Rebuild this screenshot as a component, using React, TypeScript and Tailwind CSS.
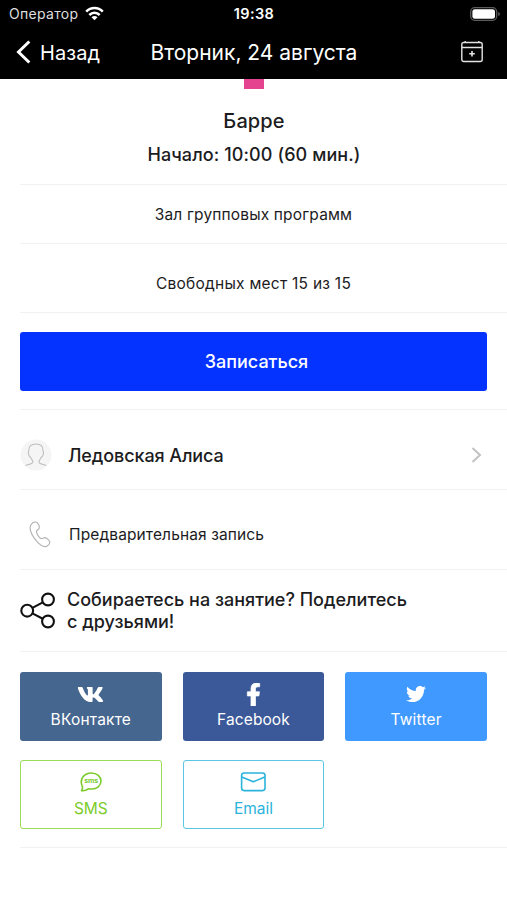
import type { ReactNode } from 'react';
import { FaFacebookF, FaTwitter, FaVk } from 'react-icons/fa';

type Share = { label: string; icon: ReactNode; box: string; text: string };

const shares: Share[] = [
  {
    label: 'ВКонтакте',
    icon: <FaVk size={27} />,
    box: 'bg-[#45668e] text-white',
    text: 'text-[15.5px] tracking-[0.2px]',
  },
  {
    label: 'Facebook',
    icon: <FaFacebookF size={23} stroke="currentColor" strokeWidth={16} />,
    box: 'bg-[#3b5998] text-white',
    text: 'text-[15.5px] tracking-[0.1px]',
  },
  {
    label: 'Twitter',
    icon: <FaTwitter size={20} />,
    box: 'bg-[#4099ff] text-white',
    text: 'text-[15.5px] tracking-[0.2px]',
  },
  {
    label: 'SMS',
    icon: <SmsIcon />,
    box: 'border-[1.5px] border-[#9bdc57] text-[#7ccb2b]',
    text: 'text-[15.5px]',
  },
  {
    label: 'Email',
    icon: <MailIcon />,
    box: 'border-[1.5px] border-[#5bc6e4] text-[#2bb3dc]',
    text: 'text-[15.5px]',
  },
];

function SmsIcon() {
  return (
    <svg className="-mt-[3px]" width="22" height="20" viewBox="0 0 22 20" fill="none" stroke="currentColor">
      <path
        d="M1.5 18.6 C2.6 17 2.8 15.3 2.1 13.8 C-0.8 7 4.4 1 11.3 1 C17 1 21 4.6 21 9.1 C21 13.8 16.8 17 11.8 17 C10.3 17 9.2 16.8 8.2 16.9 C6.4 18.4 4.2 18.9 1.5 18.6Z"
        strokeWidth="1.6"
        strokeLinejoin="round"
      />
      <text
        x="11.2"
        y="11.3"
        textAnchor="middle"
        fontSize="7"
        fontWeight="700"
        fill="currentColor"
        stroke="none"
        textLength="14"
      >
        sms
      </text>
    </svg>
  );
}

function MailIcon() {
  return (
    <svg
      className="-mt-[3px]"
      width="26"
      height="20"
      viewBox="0 0 26 20"
      fill="none"
      stroke="currentColor"
      strokeWidth="1.6"
    >
      <rect x="1.6" y="1" width="23.4" height="17.6" rx="2.5" />
      <path d="M1.8 5 L13.3 9.8 L24.8 5" strokeLinejoin="round" />
    </svg>
  );
}

function WifiIcon() {
  return (
    <svg width="19" height="15" viewBox="0 0 19 15" fill="none" stroke="#fff" strokeWidth="2.5">
      <path d="M1.2 5.6 C5.8 0.8 13.2 0.8 17.8 5.6" />
      <path d="M4.3 9 C7.3 6.1 11.7 6.1 14.7 9" />
      <path d="M9.5 14.2 L6.5 11.2 C8.2 9.6 10.8 9.6 12.5 11.2Z" fill="#fff" stroke="none" />
    </svg>
  );
}

function BatteryIcon() {
  return (
    <svg width="31" height="14" viewBox="0 0 31 14">
      <rect x="0.7" y="0.7" width="26" height="12.6" rx="4" fill="none" stroke="#5c5c5c" strokeWidth="1.3" />
      <rect x="2.4" y="2.2" width="22.6" height="9.6" rx="2.4" fill="#fff" />
      <path d="M28.2 5 Q30 5.6 30 7 Q30 8.4 28.2 9Z" fill="#5c5c5c" />
    </svg>
  );
}

function CalendarIcon() {
  return (
    <svg width="22" height="22" viewBox="0 0 22 22" fill="none" stroke="#e4e4e4" strokeWidth="1.4">
      <rect x="0.8" y="1.5" width="20.4" height="19" rx="2" />
      <path d="M1 6.5 H21 M4.2 0 V2 M17.8 0 V2" />
      <path d="M11 10 V15.6 M8.2 12.8 H13.8" strokeWidth="1.6" />
    </svg>
  );
}

function ShareIcon() {
  return (
    <svg width="36" height="38" viewBox="0 0 36 38" fill="none" stroke="#111" strokeWidth="2.1">
      <circle cx="7.2" cy="18.7" r="5.9" />
      <circle cx="28" cy="7.5" r="5.9" />
      <circle cx="28" cy="29.5" r="5.9" />
      <path d="M12.4 15.9 L22.8 10.3 M12.4 21.4 L22.8 26.8" />
    </svg>
  );
}

function Avatar() {
  return (
    <svg className="-mt-px" width="32" height="32" viewBox="0 0 32 32" fill="none">
      <circle cx="16" cy="16" r="15.5" fill="#f5f5f5" />
      <path
        d="M6 26.4 C7.5 25.3 12.8 25.6 12.9 22.8 C12.9 21.3 11.5 20.6 10.7 18.4 C9.4 18 8.6 16 8.3 14 C8.2 13 8.7 12.6 8.8 11.6 C8.7 7.4 11 5 15.9 5 C20.8 5 23.1 7.4 23 11.6 C23.1 12.6 23.6 13 23.5 14 C23.2 16 22.4 18 21.1 18.4 C20.3 20.6 18.9 21.3 18.9 22.8 C19 25.6 24.3 25.3 25.8 26.4"
        stroke="#bdbdbd"
        strokeWidth="1.1"
        strokeLinecap="round"
      />
    </svg>
  );
}

function PhoneIcon() {
  return (
    <svg width="22" height="27" viewBox="0 0 22 27" fill="none" stroke="#b4b4b4" strokeWidth="1.2">
      <path
        d="M2.8 2.6 C4.4 1 7 0.6 8.3 1.8 C9.6 3.2 10.6 5.6 10.2 7.2 C9.8 8.8 7.6 9 7.5 10.6 C7.4 12.6 10 16.6 11.9 17.5 C13.3 18.1 14.2 16.5 15.8 16.7 C17.6 16.9 20.2 19 20.7 20.6 C21.1 22.4 19.4 24.6 17.4 25.4 C14.6 26.4 10.6 23.6 7.6 20.2 C4.4 16.4 1.4 11 1.1 7.2 C1 5.2 1.5 3.8 2.8 2.6Z"
        strokeLinejoin="round"
      />
    </svg>
  );
}

export default function App() {
  return (
    <main className="flex h-[900px] w-[507px] flex-col overflow-hidden bg-white font-['Inter','Noto_Sans',sans-serif] text-[#1c1c1e]">
      <header className="h-[79px] shrink-0 bg-black text-white">
        <div className="grid h-[27px] grid-cols-3 items-center pl-[9px] pr-[6px]">
          <div className="flex items-center gap-[7px] text-[14px] leading-none tracking-[0.3px] text-[#dedede]">
            Оператор
            <WifiIcon />
          </div>
          <div className="pt-px pr-0.5 text-center text-[14.5px] font-semibold leading-none tracking-[0.4px]">
            19:38
          </div>
          <div className="flex justify-end">
            <BatteryIcon />
          </div>
        </div>
        <div className="grid h-[50px] grid-cols-[100px_1fr_100px] items-center pl-4 pr-6 text-[20px] leading-none">
          <div className="flex items-center gap-[9px]">
            <svg width="15" height="24" viewBox="0 0 15 24" fill="none" stroke="#fff" strokeWidth="3">
              <path d="M13.3 1.5 L2.5 12 L13.3 22.5" />
            </svg>
            <span className="pt-px tracking-[0.1px]">Назад</span>
          </div>
          <h1 className="pl-[9px] pt-px text-center text-[21px] whitespace-nowrap">Вторник, 24 августа</h1>
          <div className="flex justify-end">
            <CalendarIcon />
          </div>
        </div>
      </header>

      <section className="flex h-[105px] shrink-0 flex-col items-center">
        <div className="h-[10px] w-5 bg-[#e5438f]" />
        <h2 className="mt-5 pl-px text-[20px] font-medium leading-6 tracking-[0.1px]">Барре</h2>
        <p className="mt-2.5 pl-px text-[18px] font-medium leading-6 tracking-[0.1px]">Начало: 10:00 (60 мин.)</p>
      </section>

      <div className="ml-5 border-y border-[#f1f1f1]">
        <p className="flex h-[58px] items-center justify-center pr-5 pt-0.5 text-[15.5px] tracking-[0.15px]">
          Зал групповых программ
        </p>
      </div>
      <p className="ml-5 flex h-[69px] items-center justify-center border-b border-[#f1f1f1] pr-5 pt-3 text-[15.5px] tracking-[0.25px]">
        Свободных мест 15 из 15
      </p>

      <div className="ml-5 h-[97px] shrink-0 border-b border-[#f1f1f1] pr-5 pt-[19px]">
        <button className="h-[59px] w-full rounded-[3px] bg-[#0433ff] pl-1.5 text-[18px] font-medium text-white">
          Записаться
        </button>
      </div>

      <div className="ml-5 flex h-20 shrink-0 items-center border-b border-[#f1f1f1] pt-3 pr-[25px]">
        <Avatar />
        <span className="ml-4 flex-1 text-[18px] font-medium tracking-[-0.1px]">Ледовская Алиса</span>
        <svg className="-mt-px" width="11" height="16" viewBox="0 0 11 16" fill="none" stroke="#c2c2c2" strokeWidth="2">
          <path d="M1.5 1 L9 8 L1.5 15" />
        </svg>
      </div>

      <div className="ml-5 flex h-20 shrink-0 items-center border-b border-[#f1f1f1] pt-2.5 pl-[9px]">
        <PhoneIcon />
        <span className="ml-[18px] text-[15.5px] tracking-[0.12px]">Предварительная запись</span>
      </div>

      <div className="ml-5 flex h-[82px] shrink-0 items-center border-b border-[#f1f1f1]">
        <ShareIcon />
        <p className="ml-[11px] text-[18px] font-medium leading-[22px]">
          Собираетесь на занятие? Поделитесь
          <br />с друзьями!
        </p>
      </div>

      <div className="ml-5 h-[196px] shrink-0 border-b border-[#f1f1f1] pr-5 pt-5">
        <div className="grid grid-cols-3 gap-x-[21px] gap-y-[19px]">
          {shares.map((s) => (
            <button
              key={s.label}
              className={`flex h-[69px] flex-col items-center rounded-[3px] ${s.box}`}
            >
              <span className="flex h-[44px] items-center justify-center">{s.icon}</span>
              <span className={`-mt-1 leading-4 ${s.text}`}>{s.label}</span>
            </button>
          ))}
        </div>
      </div>
    </main>
  );
}
